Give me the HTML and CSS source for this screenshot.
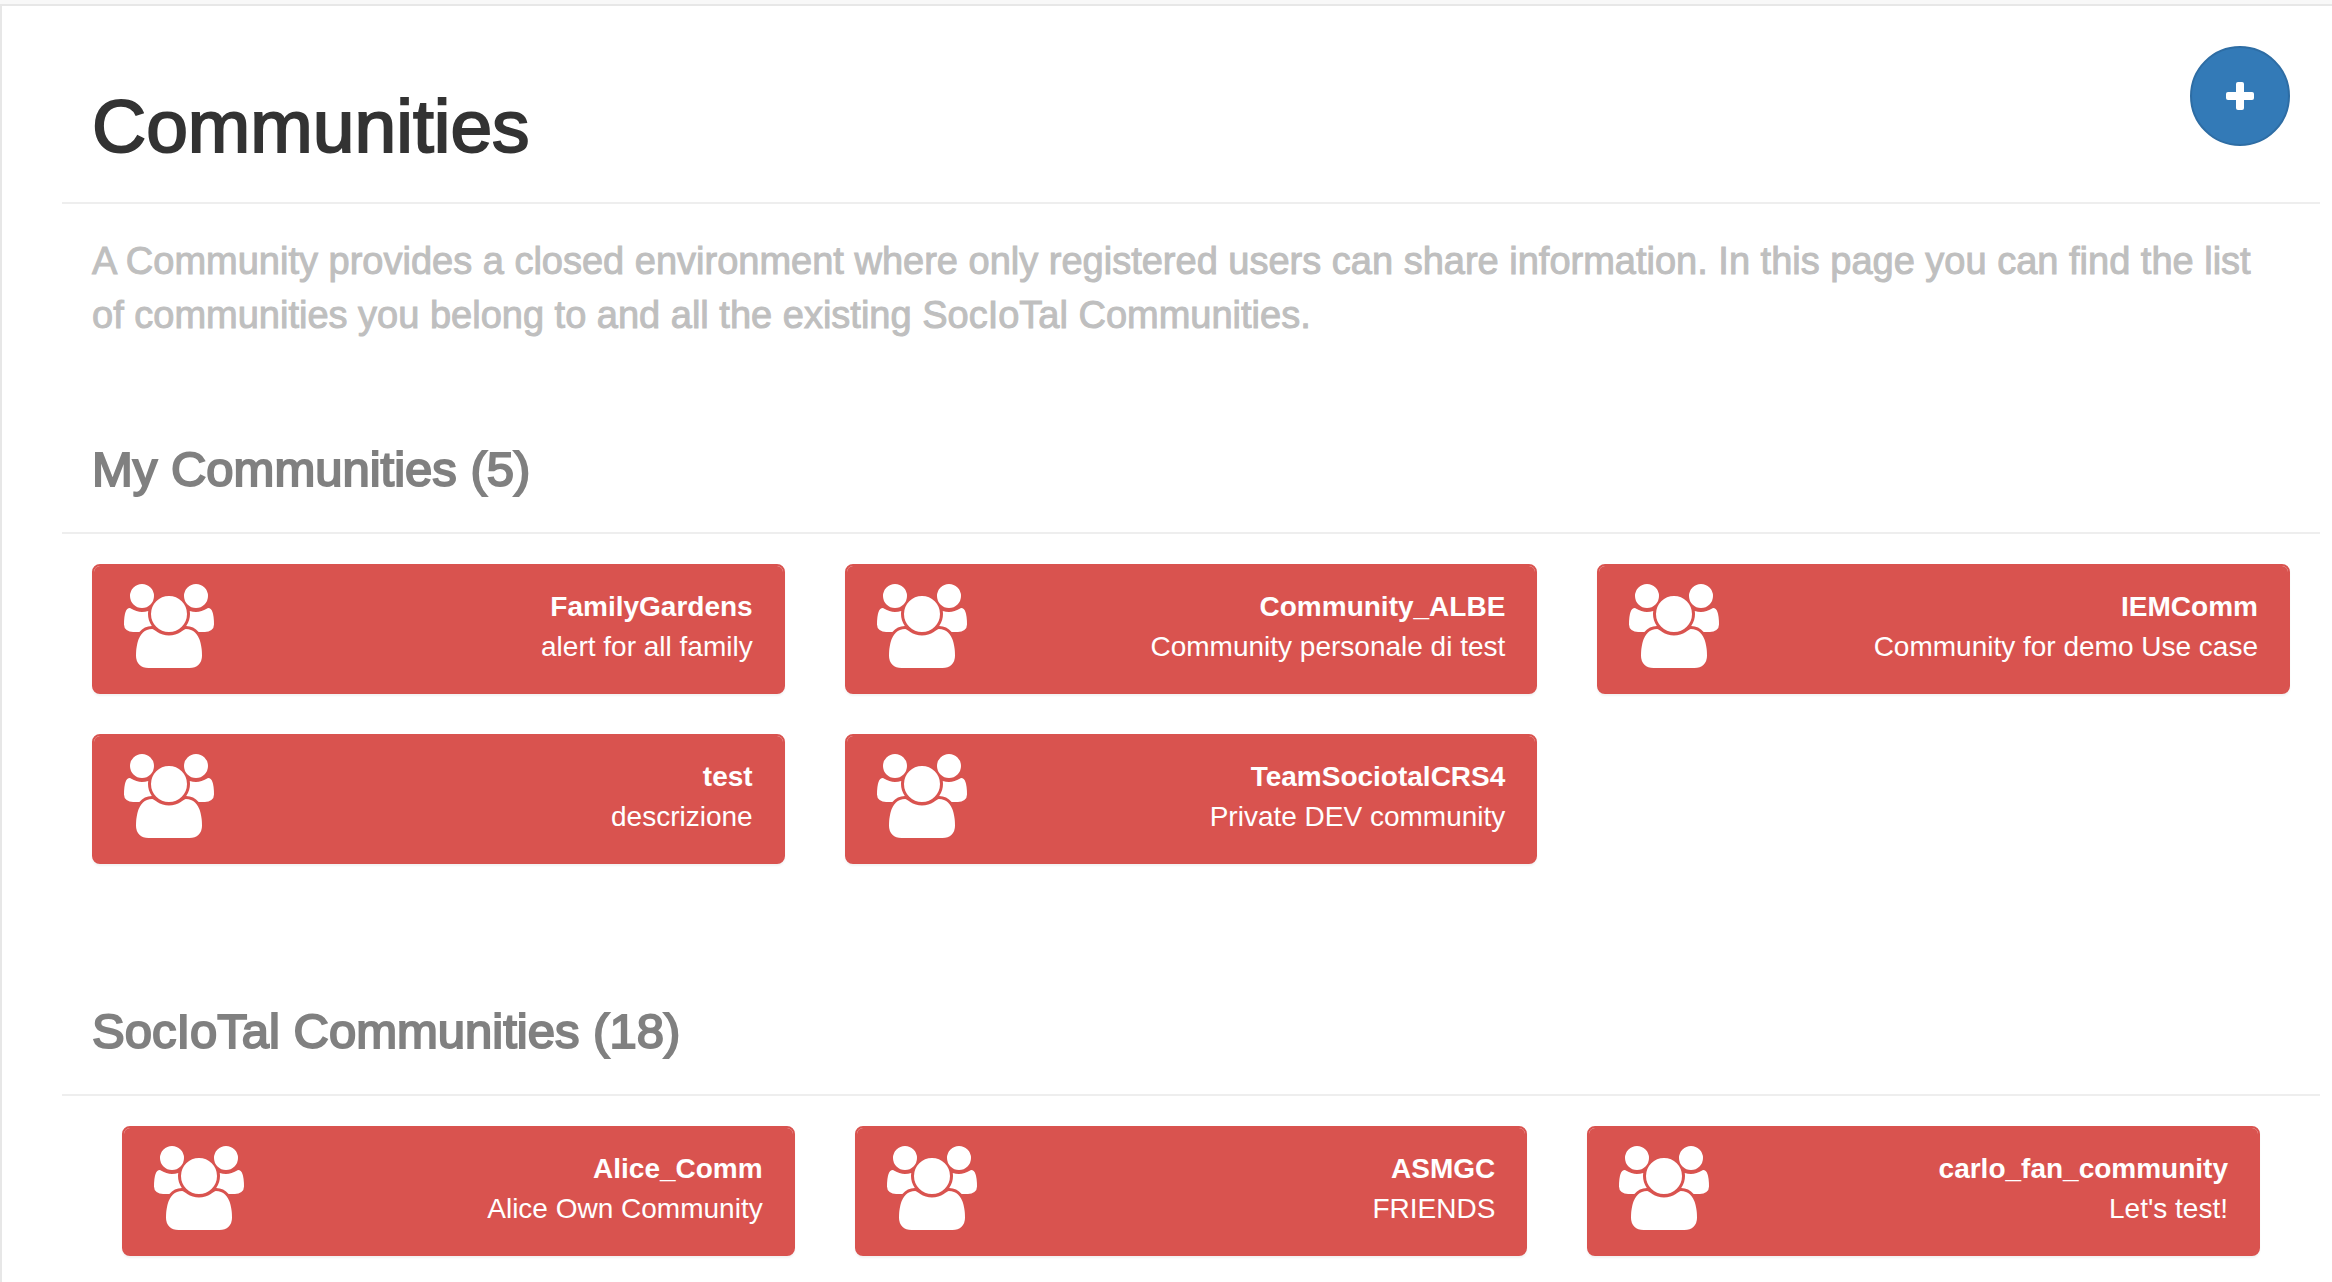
FILE: index.html
```html
<!DOCTYPE html>
<html lang="en">
<head>
<meta charset="utf-8">
<title>Communities</title>
<link rel="stylesheet" href="styles.css">
</head>
<body>
<svg class="sprite" aria-hidden="true">
  <symbol id="users" viewBox="0 0 1920 1792"><path d="M593 896q-162 5-265 128h-134q-82 0-138-40.5t-56-118.5q0-353 124-353 6 0 43.5 21t97.5 42.5 119 21.5q67 0 133-23-5 37-5 66 0 139 81 256zm1071 637q0 120-73 189.5t-194 69.5h-874q-121 0-194-69.5t-73-189.5q0-53 3.5-103.5t14-109 26.5-108.5 43-97.5 62-81 85.5-53.5 111.5-20q10 0 43 21.5t73 48 107 48 135 21.5 135-21.5 107-48 73-48 43-21.5q61 0 111.5 20t85.5 53.5 62 81 43 97.5 26.5 108.5 14 109 3.5 103.5zm-1024-1277q0 106-75 181t-181 75-181-75-75-181 75-181 181-75 181 75 75 181zm704 384q0 159-112.5 271.5t-271.5 112.5-271.5-112.5-112.5-271.5 112.5-271.5 271.5-112.5 271.5 112.5 112.5 271.5zm576 225q0 78-56 118.5t-138 40.5h-134q-103-123-265-128 81-117 81-256 0-29-5-66 66 23 133 23 59 0 119-21.5t97.5-42.5 43.5-21q124 0 124 353zm-128-609q0 106-75 181t-181 75-181-75-75-181 75-181 181-75 181 75 75 181z"/></symbol>
</svg>
<div class="navbar-edge"></div>
<main class="page">
  <header class="page-header">
    <h1 class="page-title">Communities</h1>
    <button class="add-button" type="button" aria-label="Add community">
      <svg class="add-icon" viewBox="0 0 28 28" aria-hidden="true"><rect x="0" y="10" width="28" height="8" rx="2"/><rect x="10" y="0" width="8" height="28" rx="2"/></svg>
    </button>
  </header>
  <p class="lead">A Community provides a closed environment where only registered users can share information. In this page you can find the list of communities you belong to and all the existing SocIoTal Communities.</p>

  <section class="group">
    <h2 class="group-title">My Communities (5)</h2>
    <div class="cards">
      <a class="card" href="#"><span class="card-heading"><svg class="card-icon" aria-hidden="true"><use href="#users"/></svg><span class="card-text"><strong>FamilyGardens</strong><span>alert for all family</span></span></span></a>
      <a class="card" href="#"><span class="card-heading"><svg class="card-icon" aria-hidden="true"><use href="#users"/></svg><span class="card-text"><strong>Community_ALBE</strong><span>Community personale di test</span></span></span></a>
      <a class="card" href="#"><span class="card-heading"><svg class="card-icon" aria-hidden="true"><use href="#users"/></svg><span class="card-text"><strong>IEMComm</strong><span>Community for demo Use case</span></span></span></a>
      <a class="card" href="#"><span class="card-heading"><svg class="card-icon" aria-hidden="true"><use href="#users"/></svg><span class="card-text"><strong>test</strong><span>descrizione</span></span></span></a>
      <a class="card" href="#"><span class="card-heading"><svg class="card-icon" aria-hidden="true"><use href="#users"/></svg><span class="card-text"><strong>TeamSociotalCRS4</strong><span>Private DEV community</span></span></span></a>
    </div>
  </section>

  <section class="group group-all">
    <h2 class="group-title">SocIoTal Communities (18)</h2>
    <div class="cards cards-inset">
      <a class="card" href="#"><span class="card-heading"><svg class="card-icon" aria-hidden="true"><use href="#users"/></svg><span class="card-text"><strong>Alice_Comm</strong><span>Alice Own Community</span></span></span></a>
      <a class="card" href="#"><span class="card-heading"><svg class="card-icon" aria-hidden="true"><use href="#users"/></svg><span class="card-text"><strong>ASMGC</strong><span>FRIENDS</span></span></span></a>
      <a class="card" href="#"><span class="card-heading"><svg class="card-icon" aria-hidden="true"><use href="#users"/></svg><span class="card-text"><strong>carlo_fan_community</strong><span>Let's test!</span></span></span></a>
    </div>
  </section>
</main>
</body>
</html>
```
FILE: styles.css
```css
* {
  box-sizing: border-box;
}

body {
  margin: 0;
  display: flex;
  flex-direction: column;
  min-height: 100vh;
  background: #fff;
  color: #333;
  font-family: "Liberation Sans", Arial, sans-serif;
  font-size: 28px;
  line-height: 40px;
}

.sprite {
  display: none;
}

.navbar-edge {
  height: 6px;
  background: #f8f8f8;
  border-bottom: 2px solid #e7e7e7;
}

.page {
  flex: 1;
  padding: 0 12px 24px 60px;
  border-left: 2px solid #e7e7e7;
}

.page-header {
  display: flex;
  justify-content: space-between;
  align-items: flex-start;
  padding: 40px 30px 36px;
  border-bottom: 2px solid #eee;
}

.page-title {
  margin: 40px 0 0;
  font-size: 75px;
  font-weight: 400;
  line-height: 80px;
  -webkit-text-stroke: 2px currentColor;
}

.add-button {
  display: flex;
  align-items: center;
  justify-content: center;
  width: 100px;
  height: 100px;
  padding: 0;
  border: 2px solid #2e6da4;
  border-radius: 50%;
  background: #337ab7;
}

.add-icon {
  width: 28px;
  height: 28px;
  fill: #fff;
}

.lead {
  margin: 30px 0 0;
  padding: 0 30px;
  color: #bfbfbf;
  font-size: 38px;
  line-height: 54px;
  -webkit-text-stroke: 1px currentColor;
}

.group {
  margin-top: 100px;
}

.group-all {
  margin-top: 140px;
}

.group-title {
  margin: 0 0 30px;
  padding: 0 30px 36px;
  border-bottom: 2px solid #eee;
  color: #808080;
  font-size: 49px;
  font-weight: 400;
  line-height: 54px;
  -webkit-text-stroke: 2px currentColor;
}

.cards {
  display: grid;
  grid-template-columns: repeat(3, 1fr);
  gap: 40px 60px;
  padding: 0 30px;
}

.cards-inset {
  padding: 0 60px;
}

.card {
  display: block;
  border: 2px solid #d9534f;
  border-radius: 8px;
  background: #fff;
  color: #fff;
  text-decoration: none;
  box-shadow: 0 2px 2px rgba(0, 0, 0, 0.05);
}

.card-heading {
  display: flex;
  justify-content: space-between;
  align-items: flex-start;
  padding: 18px 30px 24px;
  border-radius: 6px 6px 4px 4px;
  background: #d9534f;
}

.card-icon {
  width: 90px;
  height: 84px;
  fill: #fff;
}

.card-text {
  display: flex;
  flex-direction: column;
  padding-top: 3px;
  text-align: right;
}
```
